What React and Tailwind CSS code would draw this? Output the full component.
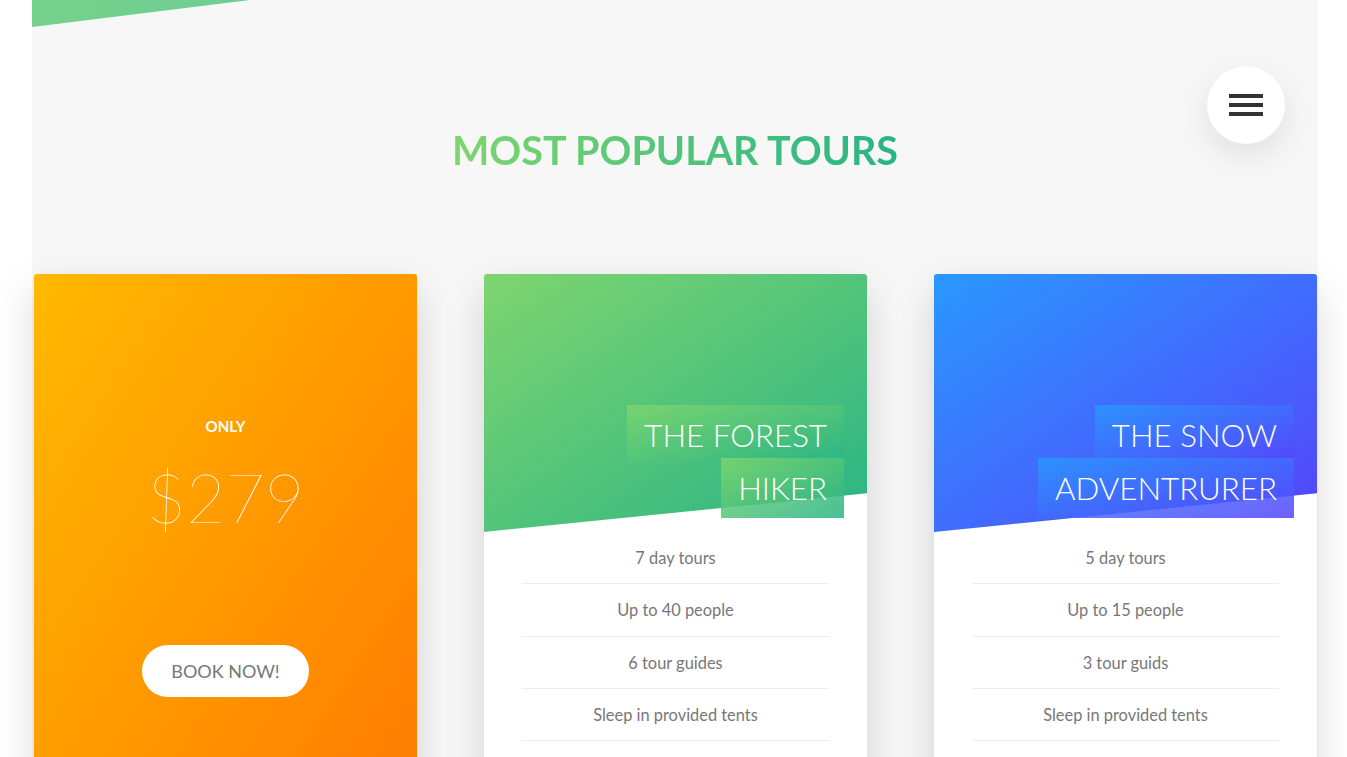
import React from 'react';

const tours = [
    {
        lines: ['THE FOREST', 'HIKER'],
        picture: 'bg-linear-to-br/srgb from-[#7ed56f] to-[#28b485]',
        span: 'bg-linear-to-br/srgb from-[#7ed56f]/85 to-[#28b485]/85',
        details: ['7 day tours', 'Up to 40 people', '6 tour guides', 'Sleep in provided tents'],
    },
    {
        lines: ['THE SNOW', 'ADVENTRURER'],
        picture: 'bg-linear-to-br/srgb from-[#2998ff] to-[#5643fa]',
        span: 'bg-linear-to-br/srgb from-[#2998ff]/85 to-[#5643fa]/85',
        details: ['5 day tours', 'Up to 15 people', '3 tour guids', 'Sleep in provided tents'],
    },
];

const MenuButton = () => (
    <button className="absolute top-[66px] left-[1207px] w-[78px] h-[78px] rounded-full bg-white shadow-[0_11px_34px_rgba(0,0,0,0.1)] flex flex-col items-center justify-center gap-[5px]">
        <span className="block w-[34px] h-[4px] bg-[#333]" />
        <span className="block w-[34px] h-[4px] bg-[#333]" />
        <span className="block w-[34px] h-[4px] bg-[#333]" />
    </button>
);

const PriceCard = () => (
    <div className="h-[582px] rounded-[3px] overflow-hidden bg-linear-to-br/srgb from-[#ffb900] to-[#ff7800] shadow-[0_15px_40px_rgba(0,0,0,0.15)] flex flex-col items-center pt-[139px] text-white">
        <p className="text-[15px] leading-[27px] font-bold uppercase">Only</p>
        <p className="text-[68px] leading-[114px] font-thin">$279</p>
        <a className="mt-[91px] h-[52px] px-[29px] rounded-full bg-white text-[#777] text-[18px] uppercase flex items-center">
            Book now!
        </a>
    </div>
);

const TourCard = ({ tour }) => (
    <div className="relative h-[582px] rounded-[3px] overflow-hidden bg-white shadow-[0_15px_40px_rgba(0,0,0,0.15)]">
        <div className={`h-[258px] ${tour.picture} [clip-path:polygon(0_0,100%_0,100%_85%,0_100%)]`} />
        {/* Heading lies over the picture */}
        <h4 className="absolute top-[135px] right-[23px] w-[75%] text-right text-white text-[31.3px] leading-[53px] font-light uppercase">
            <span className={`px-[17px] py-[11px] box-decoration-clone ${tour.span}`}>
                {tour.lines[0]}
                <br />
                {tour.lines[1]}
            </span>
        </h4>
        <ul className="w-[80%] mx-auto">
            {tour.details.map((d) => (
                <li key={d} className="py-[11px] text-center text-[16.4px] leading-[29.3px] text-[#777] border-b border-[#eee]">
                    {d}
                </li>
            ))}
        </ul>
    </div>
);

export default function App() {
    return (
        <div className="relative h-[757px] overflow-hidden bg-white pl-[32px] pr-[29px] font-['Lato','Open_Sans',sans-serif]">
            <section className="relative h-full bg-[#f7f7f7]">
                {/* bottom edge of the previous, skewed section */}
                <div className="absolute top-0 left-0 w-[218px] h-[27px] bg-linear-to-r/srgb from-[#74d28b] to-[#6ecd92] [clip-path:polygon(0_0,100%_0,0_100%)]" />

                <div className="pt-[117px] text-center">
                    <h2 className="inline-block text-[39.5px] leading-[66px] font-bold uppercase bg-linear-to-r/srgb from-[#7ed56f] to-[#28b485] bg-clip-text text-transparent">
                        Most popular tours
                    </h2>
                </div>

                <div className="mt-[91px] ml-[2px] w-[1283px] grid grid-cols-3 gap-x-[67px]">
                    <PriceCard />
                    {tours.map((t) => (
                        <TourCard key={t.lines[0]} tour={t} />
                    ))}
                </div>
            </section>
            <MenuButton />
        </div>
    );
}
